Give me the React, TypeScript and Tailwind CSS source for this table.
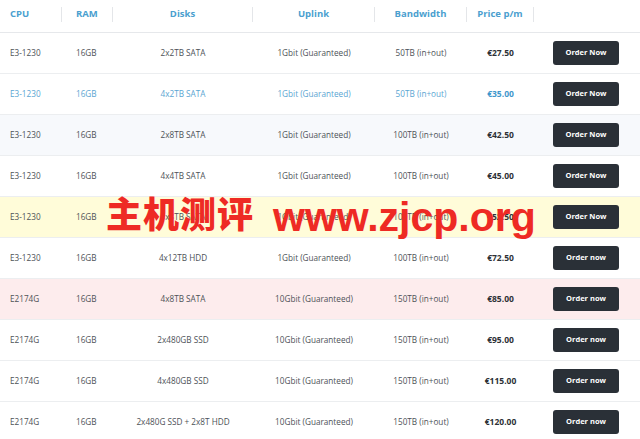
import React from 'react';

type Row = {
  cpu: string;
  disks: string;
  uplink: string;
  bandwidth: string;
  price: string;
  cta: string;
  tone?: 'blue' | 'soft' | 'yellow' | 'pink';
};

const rows: Row[] = [
  { cpu: 'E3-1230', disks: '2x2TB SATA', uplink: '1Gbit (Guaranteed)', bandwidth: '50TB (in+out)', price: '€27.50', cta: 'Order Now' },
  { cpu: 'E3-1230', disks: '4x2TB SATA', uplink: '1Gbit (Guaranteed)', bandwidth: '50TB (in+out)', price: '€35.00', cta: 'Order Now', tone: 'blue' },
  { cpu: 'E3-1230', disks: '2x8TB SATA', uplink: '1Gbit (Guaranteed)', bandwidth: '100TB (in+out)', price: '€42.50', cta: 'Order Now', tone: 'soft' },
  { cpu: 'E3-1230', disks: '4x4TB SATA', uplink: '1Gbit (Guaranteed)', bandwidth: '100TB (in+out)', price: '€45.00', cta: 'Order Now' },
  { cpu: 'E3-1230', disks: '4x8TB SATA', uplink: '1Gbit (Guaranteed)', bandwidth: '100TB (in+out)', price: '€52.50', cta: 'Order Now', tone: 'yellow' },
  { cpu: 'E3-1230', disks: '4x12TB HDD', uplink: '1Gbit (Guaranteed)', bandwidth: '100TB (in+out)', price: '€72.50', cta: 'Order now' },
  { cpu: 'E2174G', disks: '4x8TB SATA', uplink: '10Gbit (Guaranteed)', bandwidth: '150TB (in+out)', price: '€85.00', cta: 'Order now', tone: 'pink' },
  { cpu: 'E2174G', disks: '2x480GB SSD', uplink: '10Gbit (Guaranteed)', bandwidth: '150TB (in+out)', price: '€95.00', cta: 'Order now' },
  { cpu: 'E2174G', disks: '4x480GB SSD', uplink: '10Gbit (Guaranteed)', bandwidth: '150TB (in+out)', price: '€115.00', cta: 'Order now' },
  { cpu: 'E2174G', disks: '2x480G SSD + 2x8T HDD', uplink: '10Gbit (Guaranteed)', bandwidth: '150TB (in+out)', price: '€120.00', cta: 'Order now' },
];

const grid = 'grid grid-cols-[62px_51px_140px_122px_92px_67px_1fr]';

const toneBg = {
  blue: 'bg-white',
  soft: 'bg-[#f7f9fc]',
  yellow: 'bg-[#fffcd9]',
  pink: 'bg-[#fdeced]',
};

export default function App() {
  return (
    <div className="relative w-[640px] h-[439px] overflow-hidden bg-white font-['Open_Sans',sans-serif]">
      {/* Header */}
      <div className={`${grid} h-[33px] items-center border-b border-[#e6e8eb] text-[9.5px] font-bold text-[#4b9fcf] pb-[4px]`}>
        <div className="pl-[10px] border-r border-[#e4e6e9] h-[15px] flex items-center">CPU</div>
        <div className="pl-[14px] border-r border-[#e4e6e9] h-[15px] flex items-center">RAM</div>
        <div className="border-r border-[#e4e6e9] h-[15px] flex items-center justify-center">Disks</div>
        <div className="border-r border-[#e4e6e9] h-[15px] flex items-center justify-center">Uplink</div>
        <div className="border-r border-[#e4e6e9] h-[15px] flex items-center justify-center">Bandwidth</div>
        <div className="border-r border-[#e4e6e9] h-[15px] flex items-center justify-center">Price p/m</div>
        <div />
      </div>

      {/* Rows */}
      {rows.map((r, i) => {
        const blue = r.tone === 'blue';
        const text = blue ? 'text-[#5aa5d2]' : 'text-[#4d5257]';
        return (
          <div
            key={i}
            className={`${grid} h-[41px] items-center border-b border-[#eceef0] text-[8.2px] ${text} ${r.tone ? toneBg[r.tone] : 'bg-white'}`}
          >
            <div className="pl-[10px]">{r.cpu}</div>
            <div className="pl-[14px]">16GB</div>
            <div className="text-center">{r.disks}</div>
            <div className="text-center">{r.uplink}</div>
            <div className="text-center">{r.bandwidth}</div>
            <div className={`text-center font-bold text-[8.5px] ${blue ? 'text-[#3f97cc]' : 'text-[#2d3136]'}`}>{r.price}</div>
            <div className="flex justify-center pr-[2px]">
              <button className="w-[66px] h-6 rounded-[3px] bg-[#2a3037] text-white text-[7.5px] font-bold">
                {r.cta}
              </button>
            </div>
          </div>
        );
      })}

      {/* Watermark */}
      <div className="absolute left-[106px] top-[194px] text-[36px] leading-none font-black text-[#ee2a24] font-['Noto_Sans_CJK_SC',sans-serif] tracking-[1px]">
        主机测评
      </div>
      <div className="absolute left-[273px] top-[197px] text-[41px] leading-none font-bold text-[#ee2a24] font-['Liberation_Sans',sans-serif]">
        www.zjcp.org
      </div>
    </div>
  );
}
